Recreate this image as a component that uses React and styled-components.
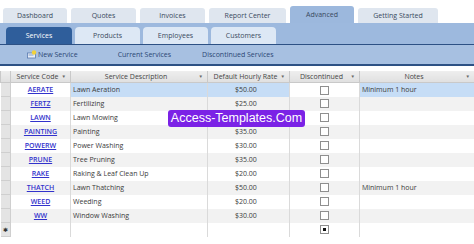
import React from "react";
import styled, { createGlobalStyle } from "styled-components";

const GlobalStyle = createGlobalStyle`
  html, body {
    margin: 0;
    padding: 0;
    background: #ffffff;
    font-family: "Open Sans", "Noto Sans", sans-serif;
  }
`;

const Page = styled.div`
  width: 474px;
  height: 244px;
  overflow: hidden;
  background: #ffffff;
`;

const MainTabs = styled.div`
  display: flex;
  align-items: flex-end;
  height: 23px;
  padding-left: 3px;
  gap: 4px;
  box-sizing: border-box;
`;

const MainTab = styled.div`
  width: ${(p) => p.w}px;
  height: ${(p) => (p.active ? 17 : 15)}px;
  background: ${(p) => (p.active ? "#9cb8dd" : "#dfe6ef")};
  border-radius: 3px 3px 0 0;
  font-size: 7px;
  color: #3a4a60;
  display: flex;
  align-items: center;
  justify-content: center;
  box-sizing: border-box;
  padding-bottom: 1px;
`;

const SubBand = styled.div`
  display: flex;
  align-items: flex-end;
  height: 22px;
  background: #9db9de;
  padding-left: 6px;
  gap: 3px;
  box-sizing: border-box;
  border-bottom: 1px solid #2d5184;
`;

const SubTab = styled.div`
  width: ${(p) => p.w}px;
  height: 17px;
  background: ${(p) => (p.active ? "#2f5e9b" : "#dde8f5")};
  color: ${(p) => (p.active ? "#ffffff" : "#3a4a60")};
  border-radius: 4px 4px 0 0;
  font-size: 7px;
  display: flex;
  align-items: center;
  justify-content: center;
`;

const ActionBar = styled.div`
  display: flex;
  align-items: center;
  height: 19px;
  background: #a7c0e1;
  border-bottom: 2px solid #2d5184;
  font-size: 7px;
  color: #2b4775;
`;

const Action = styled.div`
  display: flex;
  align-items: center;
  gap: 1px;
  margin-left: ${(p) => p.ml}px;
`;

const GridWrap = styled.div`
  position: relative;
  margin-top: 5px;
`;

const Grid = styled.table`
  border-collapse: collapse;
  table-layout: fixed;
  width: 474px;
  font-size: 7px;
  color: #3b3b3b;
`;

const HeadCell = styled.th`
  height: 11px;
  padding: 0 8px 0 2px;
  font-weight: normal;
  background: linear-gradient(#eeeeee, #e0e0e0);
  border: 1px solid #c9c9c9;
  border-top: none;
  position: relative;
  text-align: center;
  white-space: nowrap;
  overflow: hidden;
  color: #444;
`;

const Arrow = styled.span`
  position: absolute;
  right: 4px;
  top: 2px;
  font-size: 4.5px;
  color: #666;
`;

const Row = styled.tr`
  height: 14px;
  background: ${(p) => (p.alt ? "#f2f2f2" : "#ffffff")};
`;

const Selector = styled.td`
  background: #e4e4e4;
  border: 1px solid #cfcfcf;
  border-left: none;
  padding: 0;
  text-align: center;
  font-size: 6px;
  color: #333;
`;

const Cell = styled.td`
  padding: 0 0 0 ${(p) => p.pl ?? 2}px;
  border-right: 1px solid #dadada;
  white-space: nowrap;
  overflow: hidden;
  text-align: ${(p) => p.align || "left"};
  background: ${(p) => (p.hi ? "#c6ddf6" : "transparent")};
`;

const CodeLink = styled.a`
  color: #3232cc;
  font-weight: 600;
  text-decoration: underline;
`;

const Check = styled.span`
  display: inline-block;
  width: 7px;
  height: 7px;
  border: 1px solid #8f8f8f;
  background: #ffffff;
  vertical-align: middle;
  position: relative;

  &::after {
    content: "";
    display: ${(p) => (p.dot ? "block" : "none")};
    position: absolute;
    left: 2px;
    top: 2px;
    width: 3px;
    height: 3px;
    background: #111;
  }
`;

const Watermark = styled.div`
  position: absolute;
  left: 168px;
  top: 39px;
  width: 137px;
  height: 17px;
  background: #7b22e6;
  border-radius: 3px;
  color: #ffffff;
  font-family: "Liberation Sans", sans-serif;
  font-size: 12.5px;
  line-height: 17px;
  text-align: center;
  white-space: nowrap;
`;

const NewIcon = () => (
  <svg width="10" height="9" viewBox="0 0 10 9">
    <rect x="0.5" y="3" width="8" height="5" fill="#e8eef7" stroke="#5a7bb0" strokeWidth="0.8" />
    <rect x="1.5" y="4.5" width="5" height="1" fill="#7f9cc8" />
    <circle cx="7" cy="2.5" r="2.2" fill="#f2d23a" />
  </svg>
);

const services = [
  ["AERATE", "Lawn Aeration", "$50.00", "Minimum 1 hour"],
  ["FERTZ", "Fertilizing", "$25.00", ""],
  ["LAWN", "Lawn Mowing", "$25.00", ""],
  ["PAINTING", "Painting", "$35.00", ""],
  ["POWERW", "Power Washing", "$30.00", ""],
  ["PRUNE", "Tree Pruning", "$35.00", ""],
  ["RAKE", "Raking & Leaf Clean Up", "$20.00", ""],
  ["THATCH", "Lawn Thatching", "$50.00", "Minimum 1 hour"],
  ["WEED", "Weeding", "$20.00", ""],
  ["WW", "Window Washing", "$30.00", ""],
];

const mainTabs = [
  ["Dashboard", 64],
  ["Quotes", 65],
  ["Invoices", 65],
  ["Report Center", 77],
  ["Advanced", 64, true],
  ["Getting Started", 80],
];

const subTabs = [
  ["Services", 66, true],
  ["Products", 65],
  ["Employees", 65],
  ["Customers", 65],
];

export default function App() {
  return (
    <Page>
      <GlobalStyle />
      <MainTabs>
        {mainTabs.map(([label, w, active]) => (
          <MainTab key={label} w={w} active={active}>
            {label}
          </MainTab>
        ))}
      </MainTabs>
      <SubBand>
        {subTabs.map(([label, w, active]) => (
          <SubTab key={label} w={w} active={active}>
            {label}
          </SubTab>
        ))}
      </SubBand>
      <ActionBar>
        <Action ml={27}>
          <NewIcon />
          New Service
        </Action>
        <Action ml={40}>Current Services</Action>
        <Action ml={31}>Discontinued Services</Action>
      </ActionBar>
      <GridWrap>
        <Grid>
          <colgroup>
            <col style={{ width: 10 }} />
            <col style={{ width: 60 }} />
            <col style={{ width: 137 }} />
            <col style={{ width: 82 }} />
            <col style={{ width: 70 }} />
            <col style={{ width: 115 }} />
          </colgroup>
          <thead>
            <tr>
              <HeadCell />
              <HeadCell>
                Service Code <Arrow>▼</Arrow>
              </HeadCell>
              <HeadCell>
                Service Description <Arrow>▼</Arrow>
              </HeadCell>
              <HeadCell>
                Default Hourly Rate <Arrow>▼</Arrow>
              </HeadCell>
              <HeadCell>
                Discontinued <Arrow>▼</Arrow>
              </HeadCell>
              <HeadCell>
                Notes <Arrow>▼</Arrow>
              </HeadCell>
            </tr>
          </thead>
          <tbody>
            {services.map(([code, desc, rate, notes], i) => (
              <Row key={code} alt={i % 2 === 1}>
                <Selector />
                <Cell align="center" pl={0}>
                  <CodeLink>{code}</CodeLink>
                </Cell>
                <Cell hi={i === 0}>{desc}</Cell>
                <Cell hi={i === 0} pl={27}>{rate}</Cell>
                <Cell align="center" pl={0}>
                  <Check />
                </Cell>
                <Cell hi={i === 0}>{notes}</Cell>
              </Row>
            ))}
            <Row>
              <Selector>✱</Selector>
              <Cell />
              <Cell />
              <Cell />
              <Cell align="center" pl={0}>
                <Check dot />
              </Cell>
              <Cell />
            </Row>
          </tbody>
        </Grid>
        <Watermark>Access-Templates.Com</Watermark>
      </GridWrap>
    </Page>
  );
}
